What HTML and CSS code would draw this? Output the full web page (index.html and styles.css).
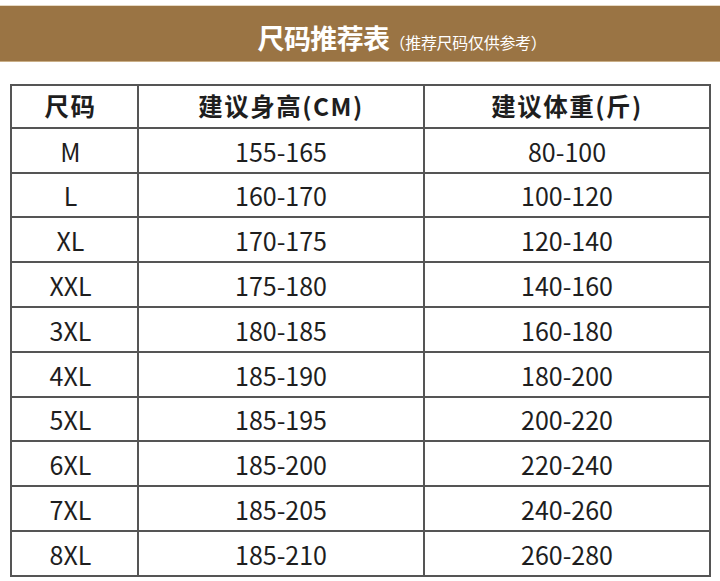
FILE: index.html
```html
<!DOCTYPE html>
<html lang="zh-CN">
<head>
<meta charset="utf-8">
<title>尺码推荐表</title>
<link rel="stylesheet" href="styles.css">
</head>
<body>
<header class="banner">
  <h1 class="title">尺码推荐表<span class="note">（推荐尺码仅供参考）</span></h1>
</header>
<table class="size-table">
  <colgroup>
    <col class="c-size">
    <col class="c-height">
    <col class="c-weight">
  </colgroup>
  <thead>
    <tr><th class="first">尺码</th><th>建议身高(CM)</th><th>建议体重(斤)</th></tr>
  </thead>
  <tbody>
    <tr><td class="first">M</td><td>155-165</td><td>80-100</td></tr>
    <tr><td class="first">L</td><td>160-170</td><td>100-120</td></tr>
    <tr><td class="first">XL</td><td>170-175</td><td>120-140</td></tr>
    <tr><td class="first">XXL</td><td>175-180</td><td>140-160</td></tr>
    <tr><td class="first">3XL</td><td>180-185</td><td>160-180</td></tr>
    <tr><td class="first">4XL</td><td>185-190</td><td>180-200</td></tr>
    <tr><td class="first">5XL</td><td>185-195</td><td>200-220</td></tr>
    <tr><td class="first">6XL</td><td>185-200</td><td>220-240</td></tr>
    <tr><td class="first">7XL</td><td>185-205</td><td>240-260</td></tr>
    <tr><td class="first">8XL</td><td>185-210</td><td>260-280</td></tr>
  </tbody>
</table>
</body>
</html>
```

FILE: styles.css
```css
html, body {
  margin: 0;
  padding: 0;
  background: #ffffff;
}
body {
  width: 720px;
  height: 581px;
  overflow: hidden;
  font-family: "Noto Sans CJK SC", "Noto Sans", sans-serif;
  color: #1e1e1e;
  padding-top: 5px;
  box-sizing: border-box;
}
.banner {
  height: 57px;
  box-sizing: border-box;
  padding-top: 8px;
  background: #9a7444;
  border-top: 1px solid #e6d9c4;
  border-bottom: 1px solid #c9ae86;
  display: flex;
  align-items: center;
  justify-content: center;
}
.title {
  margin: 0 0 0 84px;
  font-size: 27px;
  font-weight: 700;
  color: #ffffff;
  letter-spacing: -0.6px;
  line-height: 1;
  display: flex;
  align-items: baseline;
}
.note {
  font-size: 16px;
  font-weight: 400;
  letter-spacing: -0.3px;
}
.size-table {
  margin: 22px 0 0 10px;
  width: 699px;
  border-collapse: collapse;
  table-layout: fixed;
}
.c-size { width: 127px; }
.c-height { width: 286px; }
.c-weight { width: 286px; }
.size-table th,
.size-table td {
  border: 2px solid #555555;
  text-align: center;
  padding: 0;
  height: 40.8px;
  line-height: 1;
}
.size-table th {
  font-size: 24.5px;
  font-weight: 700;
  letter-spacing: 1.5px;
}
.size-table td {
  font-size: 25px;
  font-weight: 400;
  padding-top: 2px;
}
.size-table .first {
  padding-right: 8px;
}
```
